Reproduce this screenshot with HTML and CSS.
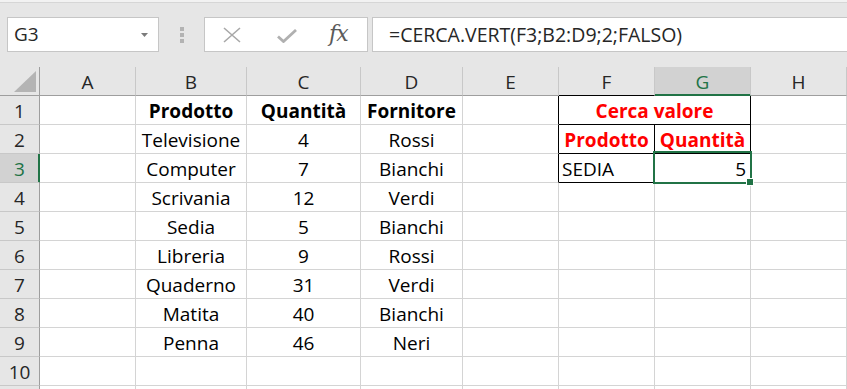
FILE: index.html
```html
<!DOCTYPE html>
<html lang="it">
<head>
<meta charset="utf-8">
<title>CERCA.VERT</title>
<link rel="stylesheet" href="styles.css">
</head>
<body>
<div class="app">
  <div class="topstrip"></div>
  <div class="fbar">
    <div class="namebox">
      <span class="nb-text">G3</span>
      <svg class="nb-arrow" width="7" height="4" viewBox="0 0 7 4"><path d="M0 0h7L3.5 4z" fill="#7b7b7b"/></svg>
    </div>
    <div class="grip"><i></i><i></i><i></i></div>
    <div class="fxbox">
      <svg class="ic-x" width="18" height="16" viewBox="0 0 18 16"><path d="M1 1L17 15M17 1L1 15" stroke="#a8a8a8" stroke-width="1.6" fill="none"/></svg>
      <svg class="ic-ok" width="20" height="14" viewBox="0 0 20 14"><path d="M1 7.5l5.5 5L19 1" stroke="#b0b0b0" stroke-width="2.8" fill="none"/></svg>
      <span class="ic-fx">fx</span>
    </div>
    <div class="finput">=CERCA.VERT(F3;B2:D9;2;FALSO)</div>
  </div>
  <div class="sheet">
    <div class="hd corner"><svg width="22" height="21" viewBox="0 0 22 21"><path d="M22 0V21H0z" fill="#b4b4b4"/></svg></div>
    <div class="hd col">A</div>
    <div class="hd col">B</div>
    <div class="hd col">C</div>
    <div class="hd col">D</div>
    <div class="hd col">E</div>
    <div class="hd col bb">F</div>
    <div class="hd col sel-col">G</div>
    <div class="hd col">H</div>

    <div class="hd row">1</div>
    <div class="c"></div>
    <div class="c ctr b">Prodotto</div>
    <div class="c ctr b">Quantità</div>
    <div class="c ctr b">Fornitore</div>
    <div class="c br"></div>
    <div class="c ctr b red merge br bb">Cerca valore</div>
    <div class="c"></div>

    <div class="hd row">2</div>
    <div class="c"></div>
    <div class="c ctr">Televisione</div>
    <div class="c ctr">4</div>
    <div class="c ctr">Rossi</div>
    <div class="c br"></div>
    <div class="c ctr b red br bb">Prodotto</div>
    <div class="c ctr b red br bb">Quantità</div>
    <div class="c"></div>

    <div class="hd row sel-row">3</div>
    <div class="c"></div>
    <div class="c ctr">Computer</div>
    <div class="c ctr">7</div>
    <div class="c ctr">Bianchi</div>
    <div class="c br"></div>
    <div class="c lft br bb">SEDIA</div>
    <div class="c rgt br bb active">5<span class="selbox"></span><span class="handle"></span></div>
    <div class="c"></div>

    <div class="hd row">4</div>
    <div class="c"></div>
    <div class="c ctr">Scrivania</div>
    <div class="c ctr">12</div>
    <div class="c ctr">Verdi</div>
    <div class="c"></div><div class="c"></div><div class="c"></div><div class="c"></div>

    <div class="hd row">5</div>
    <div class="c"></div>
    <div class="c ctr">Sedia</div>
    <div class="c ctr">5</div>
    <div class="c ctr">Bianchi</div>
    <div class="c"></div><div class="c"></div><div class="c"></div><div class="c"></div>

    <div class="hd row">6</div>
    <div class="c"></div>
    <div class="c ctr">Libreria</div>
    <div class="c ctr">9</div>
    <div class="c ctr">Rossi</div>
    <div class="c"></div><div class="c"></div><div class="c"></div><div class="c"></div>

    <div class="hd row">7</div>
    <div class="c"></div>
    <div class="c ctr">Quaderno</div>
    <div class="c ctr">31</div>
    <div class="c ctr">Verdi</div>
    <div class="c"></div><div class="c"></div><div class="c"></div><div class="c"></div>

    <div class="hd row">8</div>
    <div class="c"></div>
    <div class="c ctr">Matita</div>
    <div class="c ctr">40</div>
    <div class="c ctr">Bianchi</div>
    <div class="c"></div><div class="c"></div><div class="c"></div><div class="c"></div>

    <div class="hd row">9</div>
    <div class="c"></div>
    <div class="c ctr">Penna</div>
    <div class="c ctr">46</div>
    <div class="c ctr">Neri</div>
    <div class="c"></div><div class="c"></div><div class="c"></div><div class="c"></div>

    <div class="hd row">10</div>
    <div class="c"></div><div class="c"></div><div class="c"></div><div class="c"></div>
    <div class="c"></div><div class="c"></div><div class="c"></div><div class="c"></div>

    <div class="hd row"></div>
    <div class="c"></div><div class="c"></div><div class="c"></div><div class="c"></div>
    <div class="c"></div><div class="c"></div><div class="c"></div><div class="c"></div>
  </div>
</div>
</body>
</html>
```

FILE: styles.css
```css
* { box-sizing: border-box; }
html, body {
  margin: 0;
  padding: 0;
  overflow: hidden;
  background: #e6e6e6;
}
body {
  font-family: "Open Sans", "Noto Sans", sans-serif;
  font-size: 19px;
  color: #000;
}
.app {
  width: 847px;
  height: 389px;
  overflow: hidden;
}
.topstrip {
  height: 3px;
  background: #f2f2f2;
  border-bottom: 1px solid #d6d6d6;
}
.fbar {
  display: flex;
  align-items: center;
  height: 64px;
  padding: 14px 0 15px 7px;
}
.namebox {
  width: 152px;
  height: 35px;
  background: #fff;
  border: 1px solid #c6c6c6;
  display: flex;
  align-items: center;
  justify-content: space-between;
  padding: 0 10px 0 6px;
  color: #262626;
  line-height: 1;
}
.nb-text { position: relative; top: 0; }
.grip {
  width: 45px;
  display: flex;
  flex-direction: column;
  align-items: center;
  gap: 2px;
  padding-left: 1px;
}
.grip i {
  display: block;
  width: 4px;
  height: 4px;
  background: #b3b3b3;
}
.fxbox {
  width: 164px;
  height: 35px;
  background: #fff;
  border: 1px solid #c6c6c6;
  display: flex;
  align-items: center;
  padding-left: 18px;
}
.ic-x { margin-right: 36px; }
.ic-ok { margin-right: 32px; position: relative; top: 1px; }
.ic-fx {
  font-family: "DejaVu Serif", "Liberation Serif", serif;
  font-style: italic;
  font-size: 22px;
  color: #5a5a5a;
  letter-spacing: -1px;
  position: relative;
  top: -1px;
}
.finput {
  flex: 1;
  height: 35px;
  margin-left: 4px;
  margin-right: -4px;
  background: #fff;
  border: 1px solid #c6c6c6;
  display: flex;
  align-items: center;
  padding-left: 16px;
  color: #262626;
  font-size: 19.5px;
  line-height: 1;
}
.sheet {
  display: grid;
  grid-template-columns: 40px 96px 111px 114px 102px 96px 96px 96px 96px;
  grid-auto-rows: 29px;
  background: #fff;
}
.hd {
  background: #e6e6e6;
  color: #262626;
  line-height: 26px;
  padding-top: 2px;
  text-align: center;
  border-right: 1px solid #c8c8c8;
  border-bottom: 1px solid #c8c8c8;
}
.col { border-bottom-color: #9e9e9e; }
.row { border-right-color: #9e9e9e; }
.corner {
  border-bottom-color: #9e9e9e;
  border-right-color: #9e9e9e;
  display: flex;
  align-items: flex-end;
  justify-content: flex-end;
  padding: 0 3px 3px 0;
}
.corner svg { display: block; }
.sel-col {
  background: #d2d2d2;
  color: #217346;
  border-bottom-color: #217346;
  box-shadow: inset 0 -1px 0 #217346;
}
.sel-row {
  background: #d2d2d2;
  color: #217346;
  border-right-color: #217346;
  box-shadow: inset -1px 0 0 #217346;
}
.hd.bb { border-bottom-color: #000; }
.c {
  border-right: 1px solid #d4d4d4;
  border-bottom: 1px solid #d4d4d4;
  line-height: 25px;
  padding-top: 3px;
  white-space: nowrap;
  overflow: visible;
  color: #000;
}
.ctr { text-align: center; }
.lft { text-align: left; padding-left: 3px; }
.rgt { text-align: right; padding-right: 4px; }
.b { font-weight: 700; }
.red { color: #ff0000; }
.merge { grid-column: span 2; }
.br { border-right-color: #000; }
.c.bb { border-bottom-color: #000; }
.active { position: relative; }
.selbox {
  position: absolute;
  top: -3px;
  left: -2px;
  right: -2px;
  bottom: -2px;
  border: 2px solid #217346;
  pointer-events: none;
}
.handle {
  position: absolute;
  right: -3px;
  bottom: -3px;
  width: 6px;
  height: 6px;
  background: #217346;
  box-shadow: 0 0 0 1px #fff;
}
```
